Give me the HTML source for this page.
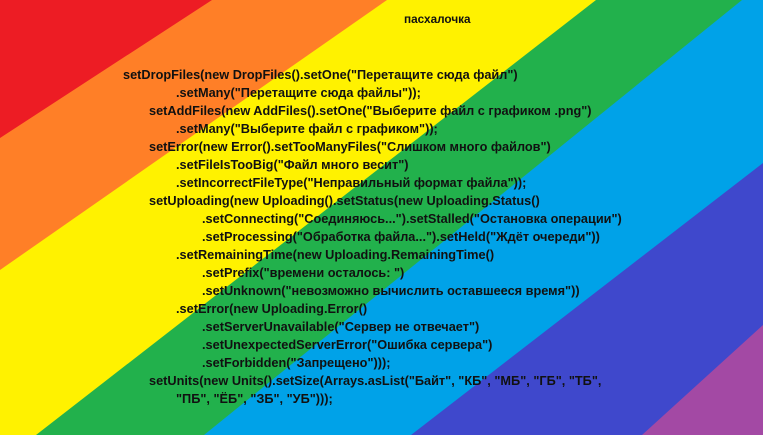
<!DOCTYPE html>
<html><head><meta charset="utf-8"><style>
html,body{margin:0;padding:0;width:763px;height:435px;overflow:hidden;}
body{position:relative;font-family:"Liberation Sans","Noto Sans CJK SC",sans-serif;font-weight:bold;color:#111;}
svg{position:absolute;left:0;top:0;}
.l{position:absolute;font-size:13px;line-height:18px;white-space:pre;transform:scaleX(0.98);transform-origin:left center;}
</style></head><body>
<svg width="763" height="435" viewBox="0 0 763 435">
<rect width="763" height="435" fill="#a349a4"/>
<polygon points="0,0 763,0 763,325 642,435 0,435" fill="#3f48cc"/>
<polygon points="0,0 763,0 763,163 411,435 0,435" fill="#00a2e8"/>
<polygon points="0,0 742,0 204,435 0,435" fill="#22b14c"/>
<polygon points="0,0 596,0 36,435 0,435" fill="#fff200"/>
<polygon points="0,0 387,0 0,270" fill="#ff7f27"/>
<polygon points="0,0 212,0 0,138" fill="#ed1c24"/>
</svg>
<div class="l" style="left:404px;top:10px;font-size:12px;">пасхалочка</div>
<div class="l" style="left:123px;top:66px">setDropFiles(new DropFiles().setOne("Перетащите сюда файл")</div>
<div class="l" style="left:176px;top:84px">.setMany("Перетащите сюда файлы"));</div>
<div class="l" style="left:149px;top:102px">setAddFiles(new AddFiles().setOne("Выберите файл с графиком .png")</div>
<div class="l" style="left:176px;top:120px">.setMany("Выберите файл с графиком"));</div>
<div class="l" style="left:149px;top:138px">setError(new Error().setTooManyFiles("Слишком много файлов")</div>
<div class="l" style="left:176px;top:156px">.setFileIsTooBig("Файл много весит")</div>
<div class="l" style="left:176px;top:174px">.setIncorrectFileType("Неправильный формат файла"));</div>
<div class="l" style="left:149px;top:192px">setUploading(new Uploading().setStatus(new Uploading.Status()</div>
<div class="l" style="left:202px;top:210px">.setConnecting("Соединяюсь...").setStalled("Остановка операции")</div>
<div class="l" style="left:202px;top:228px">.setProcessing("Обработка файла...").setHeld("Ждёт очереди"))</div>
<div class="l" style="left:176px;top:246px">.setRemainingTime(new Uploading.RemainingTime()</div>
<div class="l" style="left:202px;top:264px">.setPrefix("времени осталось: ")</div>
<div class="l" style="left:202px;top:282px">.setUnknown("невозможно вычислить оставшееся время"))</div>
<div class="l" style="left:176px;top:300px">.setError(new Uploading.Error()</div>
<div class="l" style="left:202px;top:318px">.setServerUnavailable("Сервер не отвечает")</div>
<div class="l" style="left:202px;top:336px">.setUnexpectedServerError("Ошибка сервера")</div>
<div class="l" style="left:202px;top:354px">.setForbidden("Запрещено")));</div>
<div class="l" style="left:149px;top:372px">setUnits(new Units().setSize(Arrays.asList("Байт", "КБ", "МБ", "ГБ", "ТБ",</div>
<div class="l" style="left:176px;top:390px">"ПБ", "ЁБ", "ЗБ", "УБ")));</div>
</body></html>
